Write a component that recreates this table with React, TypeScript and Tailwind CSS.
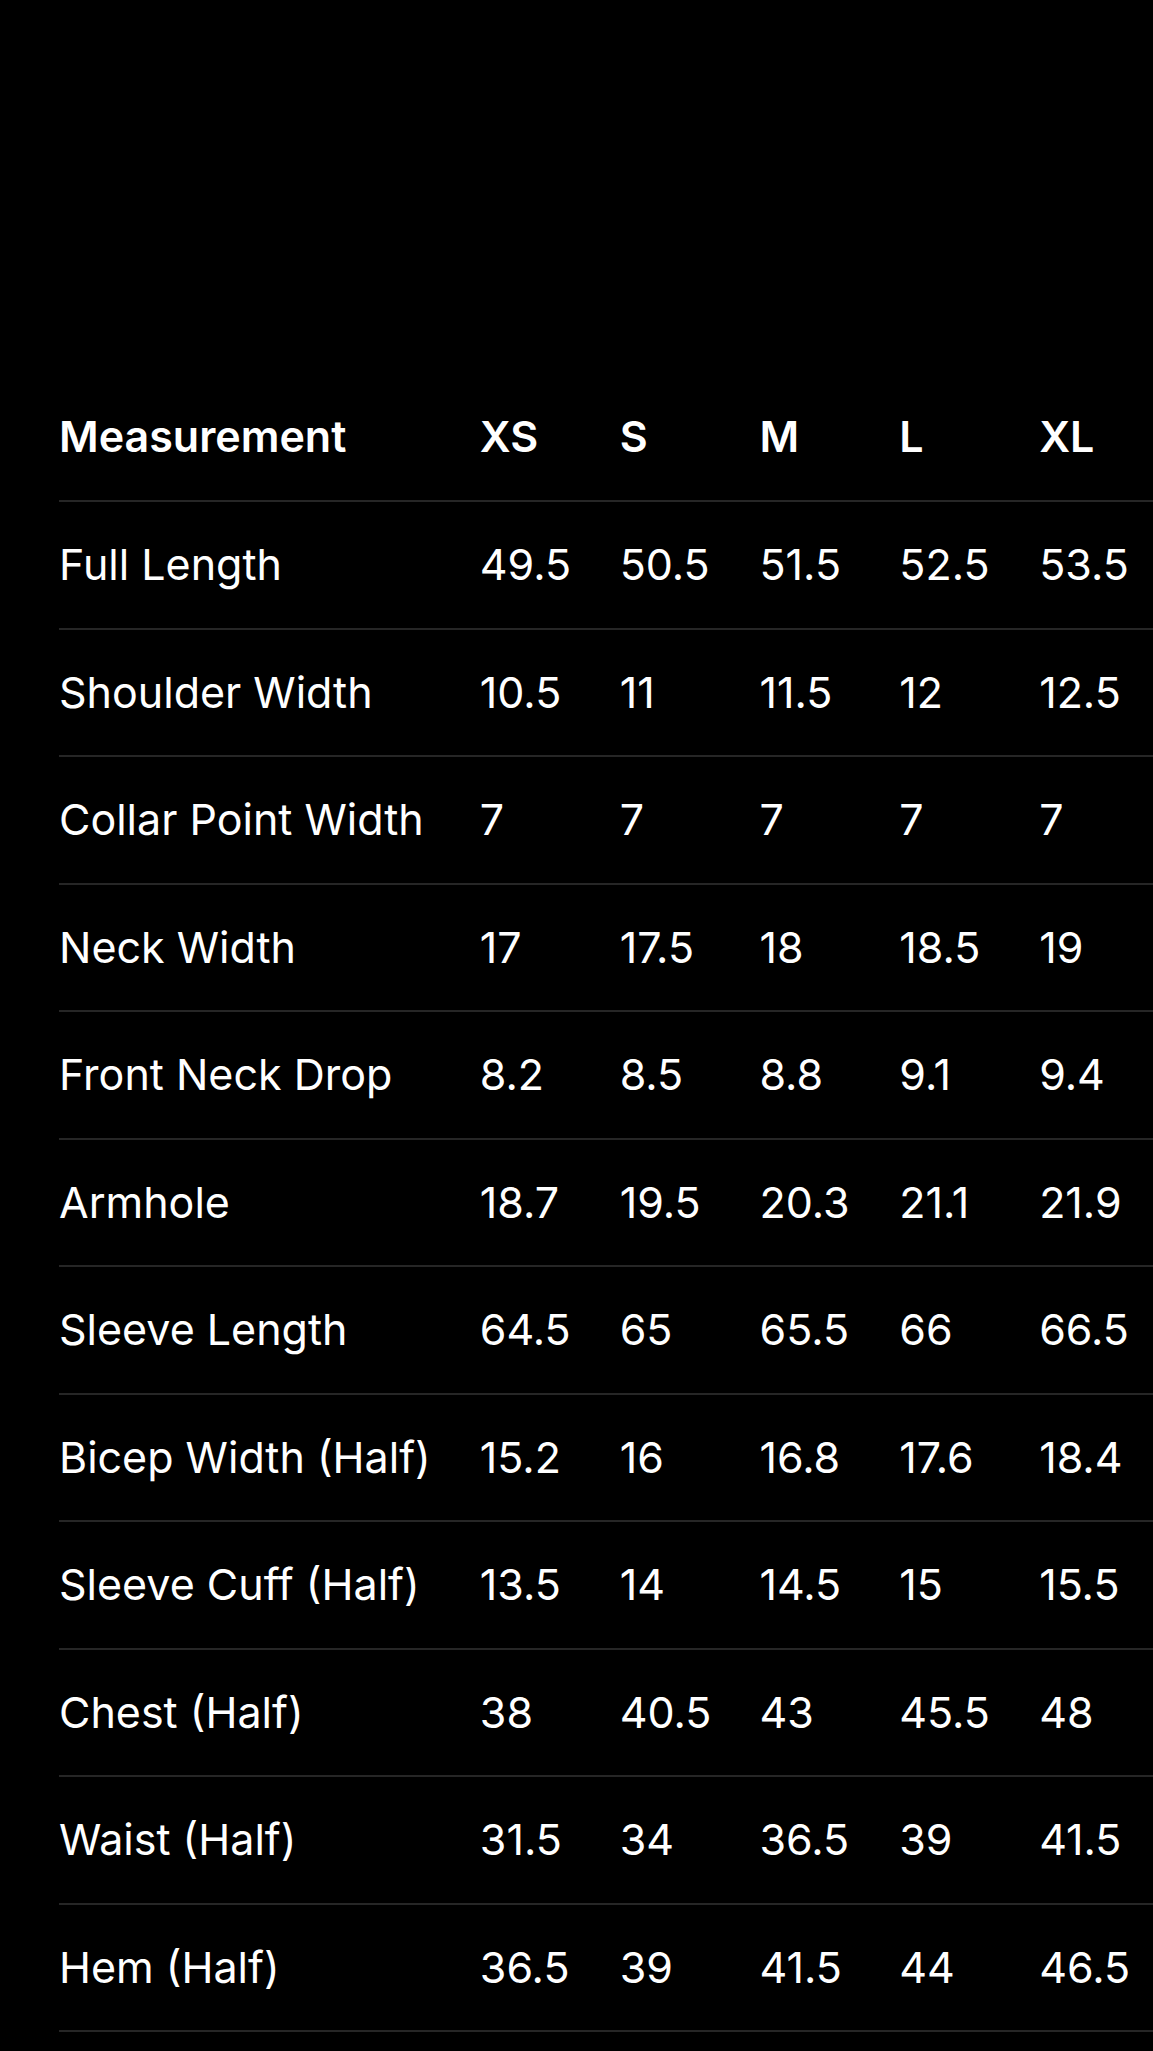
import React from "react";

const sizes = ["XS", "S", "M", "L", "XL"];

const rows: { name: string; values: string[] }[] = [
  { name: "Full Length", values: ["49.5", "50.5", "51.5", "52.5", "53.5"] },
  { name: "Shoulder Width", values: ["10.5", "11", "11.5", "12", "12.5"] },
  { name: "Collar Point Width", values: ["7", "7", "7", "7", "7"] },
  { name: "Neck Width", values: ["17", "17.5", "18", "18.5", "19"] },
  { name: "Front Neck Drop", values: ["8.2", "8.5", "8.8", "9.1", "9.4"] },
  { name: "Armhole", values: ["18.7", "19.5", "20.3", "21.1", "21.9"] },
  { name: "Sleeve Length", values: ["64.5", "65", "65.5", "66", "66.5"] },
  { name: "Bicep Width (Half)", values: ["15.2", "16", "16.8", "17.6", "18.4"] },
  { name: "Sleeve Cuff (Half)", values: ["13.5", "14", "14.5", "15", "15.5"] },
  { name: "Chest (Half)", values: ["38", "40.5", "43", "45.5", "48"] },
  { name: "Waist (Half)", values: ["31.5", "34", "36.5", "39", "41.5"] },
  { name: "Hem (Half)", values: ["36.5", "39", "41.5", "44", "46.5"] },
];

export default function App() {
  return (
    <div
      className="min-h-[2051px] w-full overflow-hidden bg-black pl-[59px] pt-[373px] text-white"
      style={{ fontFamily: "Inter, 'Noto Sans', sans-serif" }}
    >
      <table className="w-[1120px] border-collapse text-left text-[43px] leading-none">
        <colgroup>
          <col className="w-[421px]" />
          {sizes.map((s) => (
            <col key={s} className="w-[140px]" />
          ))}
        </colgroup>
        <thead>
          <tr className="h-[128px] border-b-2 border-[#262626]">
            <th className="p-0 font-semibold">Measurement</th>
            {sizes.map((s) => (
              <th key={s} className="p-0 font-semibold">
                {s}
              </th>
            ))}
          </tr>
        </thead>
        <tbody>
          {rows.map((r) => (
            <tr key={r.name} className="h-[127.5px] border-b-2 border-[#262626]">
              <td className="p-0 whitespace-nowrap">{r.name}</td>
              {r.values.map((v, i) => (
                <td key={i} className="p-0 whitespace-nowrap">
                  {v}
                </td>
              ))}
            </tr>
          ))}
        </tbody>
      </table>
    </div>
  );
}
